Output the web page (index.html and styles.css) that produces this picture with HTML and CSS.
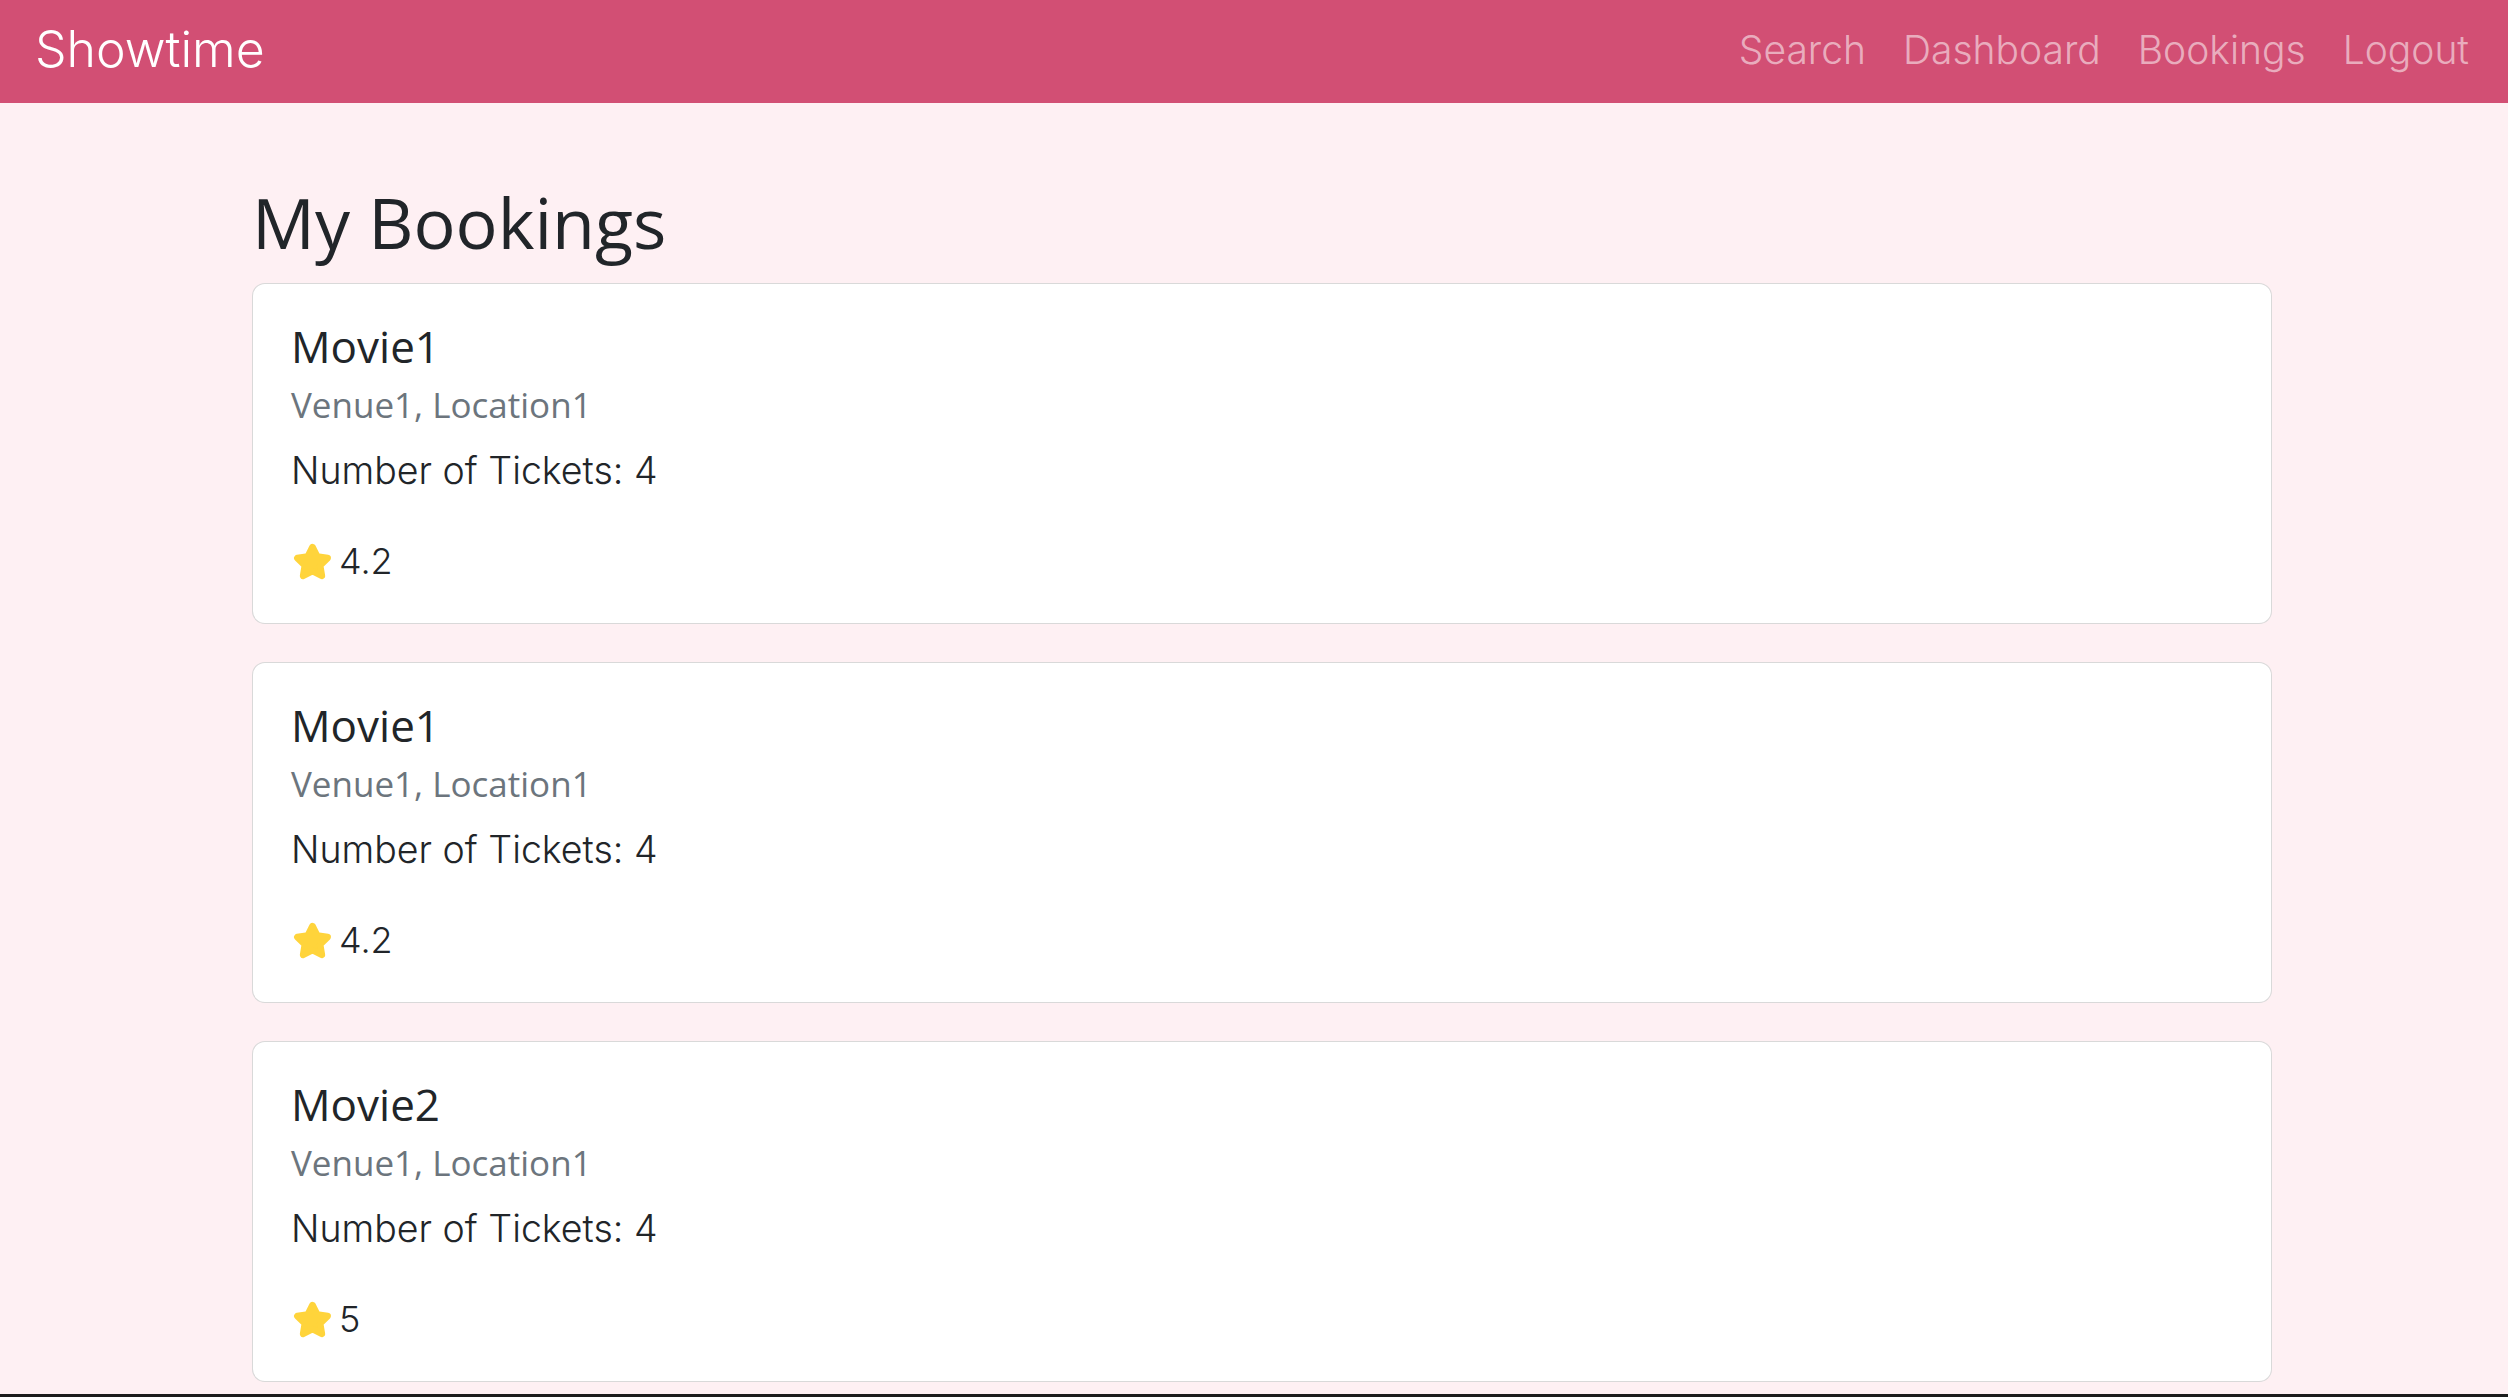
FILE: index.html
```html
<!DOCTYPE html>
<html lang="en">
<head>
<meta charset="utf-8">
<title>Showtime - My Bookings</title>
<link rel="stylesheet" href="styles.css">
</head>
<body>
<nav class="navbar">
  <a class="brand" href="#">Showtime</a>
  <ul class="nav-links">
    <li><a href="#">Search</a></li>
    <li><a href="#">Dashboard</a></li>
    <li><a href="#">Bookings</a></li>
    <li><a href="#">Logout</a></li>
  </ul>
</nav>
<main class="container">
  <h1 class="page-title">My Bookings</h1>

  <div class="card">
    <div class="card-body">
      <h5 class="card-title">Movie1</h5>
      <h6 class="card-subtitle">Venue1, Location1</h6>
      <p class="card-text">Number of Tickets: 4</p>
      <div class="rating">
        <svg class="star" viewBox="0 0 24 24" aria-hidden="true"><polygon points="12,4.3 14.53,9.32 20.08,10.17 16.09,14.13 17,19.68 12,17.1 7,19.68 7.91,14.13 3.92,10.17 9.47,9.32"/></svg>
        <span class="rating-value">4.2</span>
      </div>
    </div>
  </div>

  <div class="card">
    <div class="card-body">
      <h5 class="card-title">Movie1</h5>
      <h6 class="card-subtitle">Venue1, Location1</h6>
      <p class="card-text">Number of Tickets: 4</p>
      <div class="rating">
        <svg class="star" viewBox="0 0 24 24" aria-hidden="true"><polygon points="12,4.3 14.53,9.32 20.08,10.17 16.09,14.13 17,19.68 12,17.1 7,19.68 7.91,14.13 3.92,10.17 9.47,9.32"/></svg>
        <span class="rating-value">4.2</span>
      </div>
    </div>
  </div>

  <div class="card">
    <div class="card-body">
      <h5 class="card-title">Movie2</h5>
      <h6 class="card-subtitle">Venue1, Location1</h6>
      <p class="card-text">Number of Tickets: 4</p>
      <div class="rating">
        <svg class="star" viewBox="0 0 24 24" aria-hidden="true"><polygon points="12,4.3 14.53,9.32 20.08,10.17 16.09,14.13 17,19.68 12,17.1 7,19.68 7.91,14.13 3.92,10.17 9.47,9.32"/></svg>
        <span class="rating-value">5</span>
      </div>
    </div>
  </div>
</main>
<div class="window-edge"></div>
</body>
</html>
```

FILE: styles.css
```css
html, body {
  margin: 0;
  padding: 0;
}

body {
  background: #fef0f3;
  color: #212529;
  font-family: "Inter", "Liberation Sans", sans-serif;
  overflow: hidden;
}

.navbar {
  box-sizing: border-box;
  height: 103px;
  background: #d24f74;
  display: flex;
  align-items: center;
  justify-content: space-between;
  padding: 0 39px 5px 35px;
}

.brand {
  font-family: "Inter", sans-serif;
  font-weight: 300;
  font-size: 50px;
  color: #ffffff;
  text-decoration: none;
  line-height: 1;
}

.nav-links {
  display: flex;
  gap: 37px;
  list-style: none;
  margin: 0;
  padding: 0;
}

.nav-links a {
  font-family: "Inter", sans-serif;
  font-weight: 300;
  font-size: 39px;
  color: rgba(255, 255, 255, 0.55);
  text-decoration: none;
  line-height: 1;
}

.container {
  padding: 0 236px 0 252px;
}

.page-title {
  font-family: "Open Sans", "Noto Sans", sans-serif;
  font-weight: 400;
  font-size: 70px;
  line-height: 84px;
  margin: 77px 0 19px;
  color: #212529;
}

.card {
  background: #ffffff;
  border: 1px solid rgba(0, 0, 0, 0.15);
  border-radius: 13px;
  margin-bottom: 38px;
}

.card-body {
  padding: 36px 38px 40px;
}

.card-title {
  font-family: "Open Sans", "Noto Sans", sans-serif;
  font-weight: 400;
  font-size: 44px;
  line-height: 52px;
  margin: 0;
  color: #212529;
}

.card-subtitle {
  font-family: "Open Sans", "Noto Sans", sans-serif;
  font-weight: 400;
  font-size: 35px;
  line-height: 44px;
  margin: 11px 0 0;
  color: #6c757d;
}

.card-text {
  font-weight: 300;
  font-size: 37.5px;
  line-height: 44px;
  margin: 22px 0 0;
  color: #212529;
}

.rating {
  display: flex;
  align-items: center;
  gap: 4px;
  margin-top: 46px;
  height: 44px;
}

.star {
  width: 45px;
  height: 45px;
  margin-left: -1px;
  flex: none;
}

.star polygon {
  fill: #ffd43b;
  stroke: #ffd43b;
  stroke-width: 3.5;
  stroke-linejoin: round;
}

.rating-value {
  font-weight: 300;
  font-size: 36px;
  line-height: 44px;
  color: #212529;
}

.window-edge {
  position: fixed;
  left: 0;
  right: 0;
  bottom: 0;
  height: 3px;
  background: #1c1c1c;
}
```
